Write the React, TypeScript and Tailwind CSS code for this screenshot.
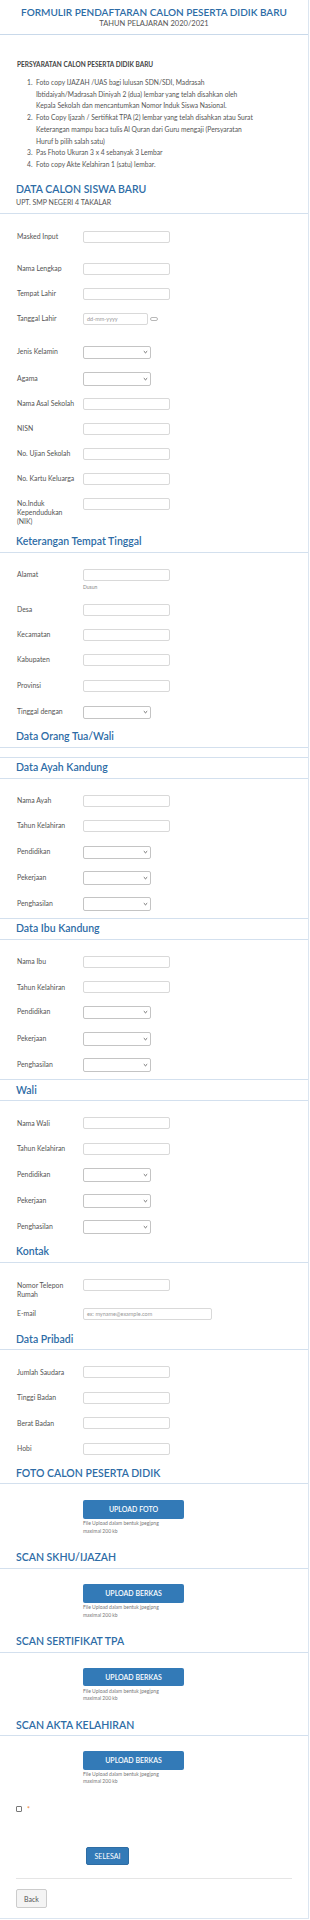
import React from "react";

type Kind = "input" | "select" | "date" | "email";

type Row = {
  label: string;
  kind: Kind;
  mt: string;
  note?: string;
};

const labelClass =
  "w-[66px] shrink-0 whitespace-pre-line pt-[1.5px] text-[6.9px] leading-[9px] text-[#555]";

const rowsSiswa: Row[] = [
  { label: "Masked Input", kind: "input", mt: "mt-[17px]" },
  { label: "Nama Lengkap", kind: "input", mt: "mt-[20px]" },
  { label: "Tempat Lahir", kind: "input", mt: "mt-[13px]" },
  { label: "Tanggal Lahir", kind: "date", mt: "mt-[13px]" },
  { label: "Jenis Kelamin", kind: "select", mt: "mt-[21px]" },
  { label: "Agama", kind: "select", mt: "mt-[13px]" },
  { label: "Nama Asal Sekolah", kind: "input", mt: "mt-[12px]" },
  { label: "NISN", kind: "input", mt: "mt-[13px]" },
  { label: "No. Ujian Sekolah", kind: "input", mt: "mt-[13px]" },
  { label: "No. Kartu Keluarga", kind: "input", mt: "mt-[13px]" },
  { label: "No.Induk\nKependudukan\n(NIK)", kind: "input", mt: "mt-[13px]" },
];

const rowsTinggal: Row[] = [
  { label: "Alamat", kind: "input", mt: "mt-[16px]", note: "Dusun" },
  { label: "Desa", kind: "input", mt: "mt-[14px]" },
  { label: "Kecamatan", kind: "input", mt: "mt-[13px]" },
  { label: "Kabupaten", kind: "input", mt: "mt-[13px]" },
  { label: "Provinsi", kind: "input", mt: "mt-[14px]" },
  { label: "Tinggal dengan", kind: "select", mt: "mt-[14px]" },
];

const rowsAyah: Row[] = [
  { label: "Nama Ayah", kind: "input", mt: "mt-[16px]" },
  { label: "Tahun Kelahiran", kind: "input", mt: "mt-[13px]" },
  { label: "Pendidikan", kind: "select", mt: "mt-[14px]" },
  { label: "Pekerjaan", kind: "select", mt: "mt-[12px]" },
  { label: "Penghasilan", kind: "select", mt: "mt-[12.5px]" },
];

const rowsIbu: Row[] = [
  { label: "Nama Ibu", kind: "input", mt: "mt-[16px]" },
  { label: "Tahun Kelahiran", kind: "input", mt: "mt-[13.5px]" },
  { label: "Pendidikan", kind: "select", mt: "mt-[12.5px]" },
  { label: "Pekerjaan", kind: "select", mt: "mt-[13px]" },
  { label: "Penghasilan", kind: "select", mt: "mt-[12.5px]" },
];

const rowsWali: Row[] = [
  { label: "Nama Wali", kind: "input", mt: "mt-[16px]" },
  { label: "Tahun Kelahiran", kind: "input", mt: "mt-[13.5px]" },
  { label: "Pendidikan", kind: "select", mt: "mt-[13.5px]" },
  { label: "Pekerjaan", kind: "select", mt: "mt-[12.5px]" },
  { label: "Penghasilan", kind: "select", mt: "mt-[12.5px]" },
];

const rowsKontak: Row[] = [
  { label: "Nomor Telepon\nRumah", kind: "input", mt: "mt-[16.5px]" },
  { label: "E-mail", kind: "email", mt: "mt-[9px]" },
];

const rowsPribadi: Row[] = [
  { label: "Jumlah Saudara", kind: "input", mt: "mt-[16px]" },
  { label: "Tinggi Badan", kind: "input", mt: "mt-[13.5px]" },
  { label: "Berat Badan", kind: "input", mt: "mt-[13.5px]" },
  { label: "Hobi", kind: "input", mt: "mt-[13.5px]" },
];

function Chevron() {
  return (
    <svg width="5" height="4" viewBox="0 0 5 4">
      <path d="M0.8 1.2 L2.5 2.8 L4.2 1.2" fill="none" stroke="#444" strokeWidth="0.8" />
    </svg>
  );
}

function Control({ kind }: { kind: Kind }) {
  if (kind === "select") {
    return (
      <div className="flex h-[13.5px] w-[68px] items-center justify-end rounded-[2px] border border-[#c4c4c4] bg-white pr-[2px]">
        <Chevron />
      </div>
    );
  }
  if (kind === "date") {
    return (
      <div className="flex items-center gap-[2px]">
        <div className="flex h-[12px] w-[65px] items-center rounded-[2px] border border-[#d9d9d9] bg-white pl-[3px] text-[5.5px] text-[#999]">
          dd-mm-yyyy
        </div>
        <svg width="8" height="4" viewBox="0 0 8 4">
          <rect x="0.5" y="0.5" width="7" height="3" rx="1.5" fill="none" stroke="#999" strokeWidth="0.7" />
        </svg>
      </div>
    );
  }
  if (kind === "email") {
    return (
      <div className="flex h-[12px] w-[129px] items-center rounded-[2px] border border-[#d9d9d9] bg-white pl-[3px] text-[5.5px] text-[#999]">
        ex: myname@example.com
      </div>
    );
  }
  return <div className="h-[12px] w-[87px] rounded-[2px] border border-[#d9d9d9] bg-white" />;
}

function Field({ row }: { row: Row }) {
  return (
    <div className={`flex items-start pl-[17px] ${row.mt}`}>
      <div className={labelClass}>{row.label}</div>
      <div className="flex flex-col">
        <Control kind={row.kind} />
        {row.note && (
          <div className="mt-[3px] text-[5px] leading-[6px] text-[#888]">{row.note}</div>
        )}
      </div>
    </div>
  );
}

function Heading({ title, mt, top }: { title: string; mt: string; top?: boolean }) {
  return (
    <div
      className={`border-b border-[#d3e0ee] pl-[16px] pb-[3.5px] text-[10.5px] font-semibold leading-[13px] text-[#2d6ca6] ${mt} ${
        top ? "border-t pt-[3.5px]" : ""
      }`}
    >
      {title}
    </div>
  );
}

function Upload({ text, mt }: { text: string; mt: string }) {
  return (
    <div className={`pl-[83px] ${mt}`}>
      <div className="flex h-[18.5px] w-[101px] items-center justify-center rounded-[2px] bg-[#337ab7] text-[7px] font-semibold text-white">
        {text}
      </div>
      <div className="mt-[1.5px] text-[5px] leading-[7.4px] text-[#777]">
        File Upload dalam bentuk jpeg|png
        <br />
        maximal 200 kb
      </div>
    </div>
  );
}

export default function App() {
  return (
    <div className="w-[310px] bg-white font-['Lato',sans-serif]">
      <div className="w-[309px] border-r border-b border-[#dbe5f0] bg-white pb-[10px]">
        {/* header */}
        <div className="border-b border-[#c9d9ea] pt-[6px] pb-[5px] text-center">
          <div className="text-[10px] leading-[12px] font-semibold text-[#2d6ca6]">
            FORMULIR PENDAFTARAN CALON PESERTA DIDIK BARU
          </div>
          <div className="mt-[1px] text-[7.5px] leading-[10px] text-[#555]">
            TAHUN PELAJARAN 2020/2021
          </div>
        </div>

        {/* persyaratan */}
        <div className="mt-[25px] pl-[17px] text-[6.5px] font-bold leading-[10px] text-[#444]">
          PERSYARATAN CALON PESERTA DIDIK BARU
        </div>
        <div className="mt-[7px] pl-[27px] text-[6.7px] leading-[11.7px] text-[#555]">
          <div className="flex">
            <span className="w-[9px] shrink-0">1.</span>
            <span className="whitespace-nowrap">
              Foto copy IJAZAH /UAS bagi lulusan SDN/SDI, Madrasah
              <br />
              Ibtidaiyah/Madrasah Diniyah 2 (dua) lembar yang telah disahkan oleh
              <br />
              Kepala Sekolah dan mencantumkan Nomor Induk Siswa Nasional.
            </span>
          </div>
          <div className="flex">
            <span className="w-[9px] shrink-0">2.</span>
            <span className="whitespace-nowrap">
              Foto Copy Ijazah / Sertifikat TPA (2) lembar yang telah disahkan atau Surat
              <br />
              Keterangan mampu baca tulis Al Quran dari Guru mengaji (Persyaratan
              <br />
              Huruf b pilih salah satu)
            </span>
          </div>
          <div className="flex">
            <span className="w-[9px] shrink-0">3.</span>
            <span>Pas Fhoto Ukuran 3 x 4 sebanyak 3 Lembar</span>
          </div>
          <div className="flex">
            <span className="w-[9px] shrink-0">4.</span>
            <span>Foto copy Akte Kelahiran 1 (satu) lembar.</span>
          </div>
        </div>

        {/* data calon siswa */}
        <div className="mt-[12.5px] border-b border-[#d3e0ee] pl-[16px] pb-[5.5px]">
          <div className="text-[10.5px] font-semibold leading-[13px] text-[#2d6ca6]">
            DATA CALON SISWA BARU
          </div>
          <div className="mt-[2px] text-[7px] leading-[9px] text-[#555]">
            UPT. SMP NEGERI 4 TAKALAR
          </div>
        </div>
        {rowsSiswa.map((r) => (
          <Field key={r.label} row={r} />
        ))}

        <Heading title="Keterangan Tempat Tinggal" mt="mt-[9px]" />
        {rowsTinggal.map((r) => (
          <Field key={r.label} row={r} />
        ))}

        <Heading title="Data Orang Tua/Wali" mt="mt-[11px]" />
        <Heading title="Data Ayah Kandung" mt="mt-[9px]" top />
        {rowsAyah.map((r) => (
          <Field key={r.label} row={r} />
        ))}

        <Heading title="Data Ibu Kandung" mt="mt-[7px]" top />
        {rowsIbu.map((r) => (
          <Field key={r.label} row={r} />
        ))}

        <Heading title="Wali" mt="mt-[7.5px]" top />
        {rowsWali.map((r) => (
          <Field key={r.label} row={r} />
        ))}

        <Heading title="Kontak" mt="mt-[11.5px]" />
        {rowsKontak.map((r) => (
          <Field key={r.label} row={r} />
        ))}

        <Heading title="Data Pribadi" mt="mt-[13px]" />
        {rowsPribadi.map((r) => (
          <Field key={r.label} row={r} />
        ))}

        <Heading title="FOTO CALON PESERTA DIDIK" mt="mt-[12px]" />
        <Upload text="UPLOAD FOTO" mt="mt-[16px]" />

        <Heading title="SCAN SKHU/IJAZAH" mt="mt-[16.5px]" />
        <Upload text="UPLOAD BERKAS" mt="mt-[15.5px]" />

        <Heading title="SCAN SERTIFIKAT TPA" mt="mt-[16px]" />
        <Upload text="UPLOAD BERKAS" mt="mt-[15px]" />

        <Heading title="SCAN AKTA KELAHIRAN" mt="mt-[16px]" />
        <Upload text="UPLOAD BERKAS" mt="mt-[15px]" />

        {/* checkbox */}
        <div className="mt-[20px] flex items-center gap-[5px] pl-[16px]">
          <div className="h-[6px] w-[6px] rounded-[1px] border border-[#777] bg-white" />
          <span className="text-[7px] leading-[6px] text-[#e8893f]">*</span>
        </div>

        <div className="mt-[35px] pl-[86px]">
          <button
            type="button"
            className="flex h-[18.5px] w-[43px] items-center justify-center rounded-[2px] border border-[#2e6da4] bg-[#337ab7] text-[7px] text-white"
          >
            SELESAI
          </button>
        </div>

        <div className="mx-[16px] mt-[12.5px] border-t border-[#e5e5e5]" />

        <div className="mt-[10.5px] pl-[16px]">
          <button
            type="button"
            className="flex h-[19px] w-[31px] items-center justify-center rounded-[2px] border border-[#ccc] bg-[#f4f4f4] text-[7px] text-[#555]"
          >
            Back
          </button>
        </div>
      </div>
    </div>
  );
}
